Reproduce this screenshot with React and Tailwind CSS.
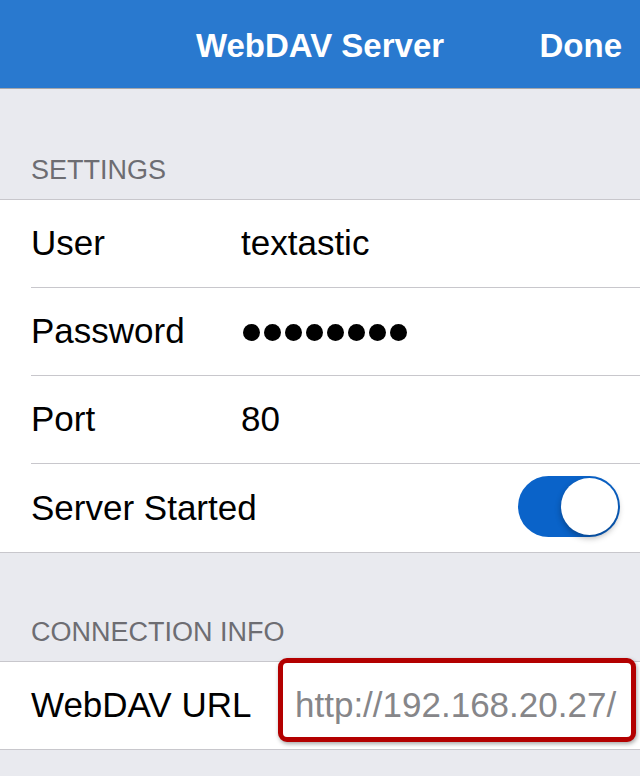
import React from 'react';

const Row = ({ label, children, last }) => (
  <div className="flex h-[88px] items-center pl-[31px]">
    <div className={`flex h-full flex-1 items-center ${last ? '' : 'border-b border-[#c8c7cc]'}`}>
      <span className="w-[210px] whitespace-nowrap text-[35px] text-black">{label}</span>
      <div className="flex flex-1 items-center pr-[20px]">{children}</div>
    </div>
  </div>
);

const SectionHeader = ({ children }) => (
  <div className="px-[31px] text-[27px] uppercase leading-[32px] text-[#6d6d72]">{children}</div>
);

const Toggle = () => (
  <div className="-mt-[3px] ml-auto flex h-[61px] w-[102px] items-center justify-end rounded-full bg-[#0a63c9] p-[2px]">
    <div className="h-[57px] w-[57px] rounded-full bg-white shadow-[0_3px_6px_rgba(0,0,0,0.3)]" />
  </div>
);

const Dots = ({ count }) => (
  <div className="flex gap-[4.5px] pl-[2px] pt-[2px]">
    {Array.from({ length: count }).map((_, i) => (
      <span key={i} className="h-[16.5px] w-[16.5px] rounded-full bg-black" />
    ))}
  </div>
);

export default function App() {
  return (
    <div className="h-[776px] w-[640px] overflow-hidden bg-[#e9eaef] font-['Liberation_Sans',Arial,sans-serif]">
      {/* Nav bar */}
      <div className="relative flex h-[89px] items-center justify-center border-b border-[#a6a7ab] bg-[#2979cf] pt-[3px] text-[33px] font-bold text-white">
        <span>WebDAV Server</span>
        <span className="absolute right-[18px]">Done</span>
      </div>

      <div className="pt-[65px]">
        <SectionHeader>Settings</SectionHeader>
        <div className="mt-[13px] border-y border-[#c8c7cc] bg-white">
          <Row label="User">
            <span className="text-[35px] text-black">textastic</span>
          </Row>
          <Row label="Password">
            <Dots count={8} />
          </Row>
          <Row label="Port">
            <span className="text-[35px] text-black">80</span>
          </Row>
          <Row label="Server Started" last>
            <Toggle />
          </Row>
        </div>

        <div className="pt-[63px]">
          <SectionHeader>Connection Info</SectionHeader>
          <div className="mt-[13px] border-y border-[#c8c7cc] bg-white">
            <div className="flex h-[87px] items-center pl-[31px]">
              <span className="w-[247px] whitespace-nowrap text-[35px] text-black">WebDAV URL</span>
              <div className="relative z-10 -mt-[4px] flex h-[84px] w-[358px] self-start items-center rounded-[9px] border-[5px] border-[#b30000] bg-white pl-[12px] shadow-[1px_2px_4px_rgba(0,0,0,0.35)]">
                <span className="pt-[10px] text-[35px] text-[#868689]">http://192.168.20.27/</span>
              </div>
            </div>
          </div>
        </div>
      </div>
    </div>
  );
}
